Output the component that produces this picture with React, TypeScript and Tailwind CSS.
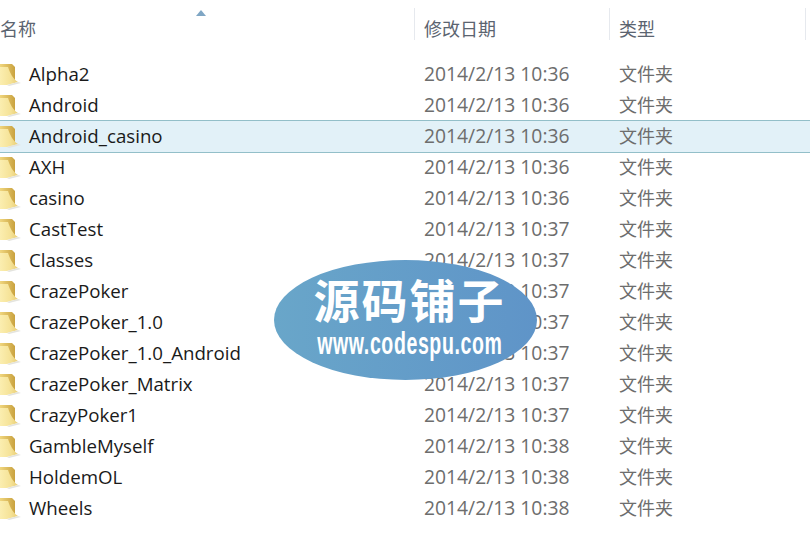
const folders: [string, string][] = [
  ["Alpha2", "10:36"],
  ["Android", "10:36"],
  ["Android_casino", "10:36"],
  ["AXH", "10:36"],
  ["casino", "10:36"],
  ["CastTest", "10:37"],
  ["Classes", "10:37"],
  ["CrazePoker", "10:37"],
  ["CrazePoker_1.0", "10:37"],
  ["CrazePoker_1.0_Android", "10:37"],
  ["CrazePoker_Matrix", "10:37"],
  ["CrazyPoker1", "10:37"],
  ["GambleMyself", "10:38"],
  ["HoldemOL", "10:38"],
  ["Wheels", "10:38"],
];

function FolderIcon() {
  return (
    <svg width="22" height="25" viewBox="0 0 22 25" className="shrink-0">
      <defs>
        <linearGradient id="back" x1="0" y1="0" x2="1" y2="0">
          <stop offset="0" stopColor="#f0d67e" />
          <stop offset="1" stopColor="#c9a23f" />
        </linearGradient>
        <linearGradient id="front" x1="0" y1="0" x2="1" y2="0">
          <stop offset="0" stopColor="#fbeeb0" />
          <stop offset="0.6" stopColor="#f5e296" />
          <stop offset="1" stopColor="#e8cc74" />
        </linearGradient>
      </defs>
      <path d="M0 2 L12 2 L15 5 L15 20 L0 23 Z" fill="url(#back)" />
      <path d="M0 5 L8 5 C10 11 13 17 18 20 L7 23 L0 23 Z" fill="url(#front)" />
      <path d="M7 23 L18 20 L21 21 L9 24 Z" fill="#e4e4de" />
    </svg>
  );
}

export default function App() {
  return (
    <div className="relative h-[543px] w-[810px] overflow-hidden bg-white font-['Open_Sans','Noto_Sans_CJK_SC',sans-serif] text-[18px]">
      {/* Header */}
      <div className="relative grid h-[59px] grid-cols-[414px_195px_196px_5px] pt-2 text-[#5b6470]">
        <div className="flex h-8 items-center pt-[11px]">名称</div>
        <div className="flex h-8 items-center border-l border-[#e6e9ee] pl-[9px] pt-[11px]">修改日期</div>
        <div className="flex h-8 items-center border-l border-[#e6e9ee] pl-[9px] pt-[11px]">类型</div>
        <div className="h-8 border-l border-[#e6e9ee]" />
        <svg width="10" height="6" viewBox="0 0 10 6" className="absolute left-[196px] top-[10px]">
          <path d="M5 0 L10 6 L0 6 Z" fill="#7fa6c4" />
        </svg>
      </div>

      {/* Rows */}
      {folders.map(([name, time]) => (
        <div
          key={name}
          className={
            name === "Android_casino"
              ? "-my-px grid h-[33px] grid-cols-[424px_195px_1fr] items-center border-y border-[#93bfc9] bg-[#e2f1f8]"
              : "grid h-[31px] grid-cols-[424px_195px_1fr] items-center"
          }
        >
          <div className="flex items-center gap-[7px] text-[18.7px] text-[#1a1a1a]">
            <FolderIcon />
            <span>{name}</span>
          </div>
          <div className="text-[19.3px] text-[#6d6d6d]">2014/2/13 {time}</div>
          <div className="text-[#6d6d6d]">文件夹</div>
        </div>
      ))}

      {/* Watermark */}
      <div className="absolute left-[274px] top-[260px] flex h-[120px] w-[263px] flex-col items-center rounded-[50%] bg-gradient-to-r from-[#69a6c9] to-[#5f94c8] pl-[8px] pt-[11px] font-['Noto_Sans_CJK_SC',sans-serif] font-bold text-white">
        <div className="text-[46px] leading-[54px] tracking-[2px]">源码铺子</div>
        <div className="origin-center scale-x-[0.61] whitespace-nowrap font-['Liberation_Sans',sans-serif] text-[32px] leading-[37px] tracking-[1px]">www.codespu.com</div>
      </div>
    </div>
  );
}
